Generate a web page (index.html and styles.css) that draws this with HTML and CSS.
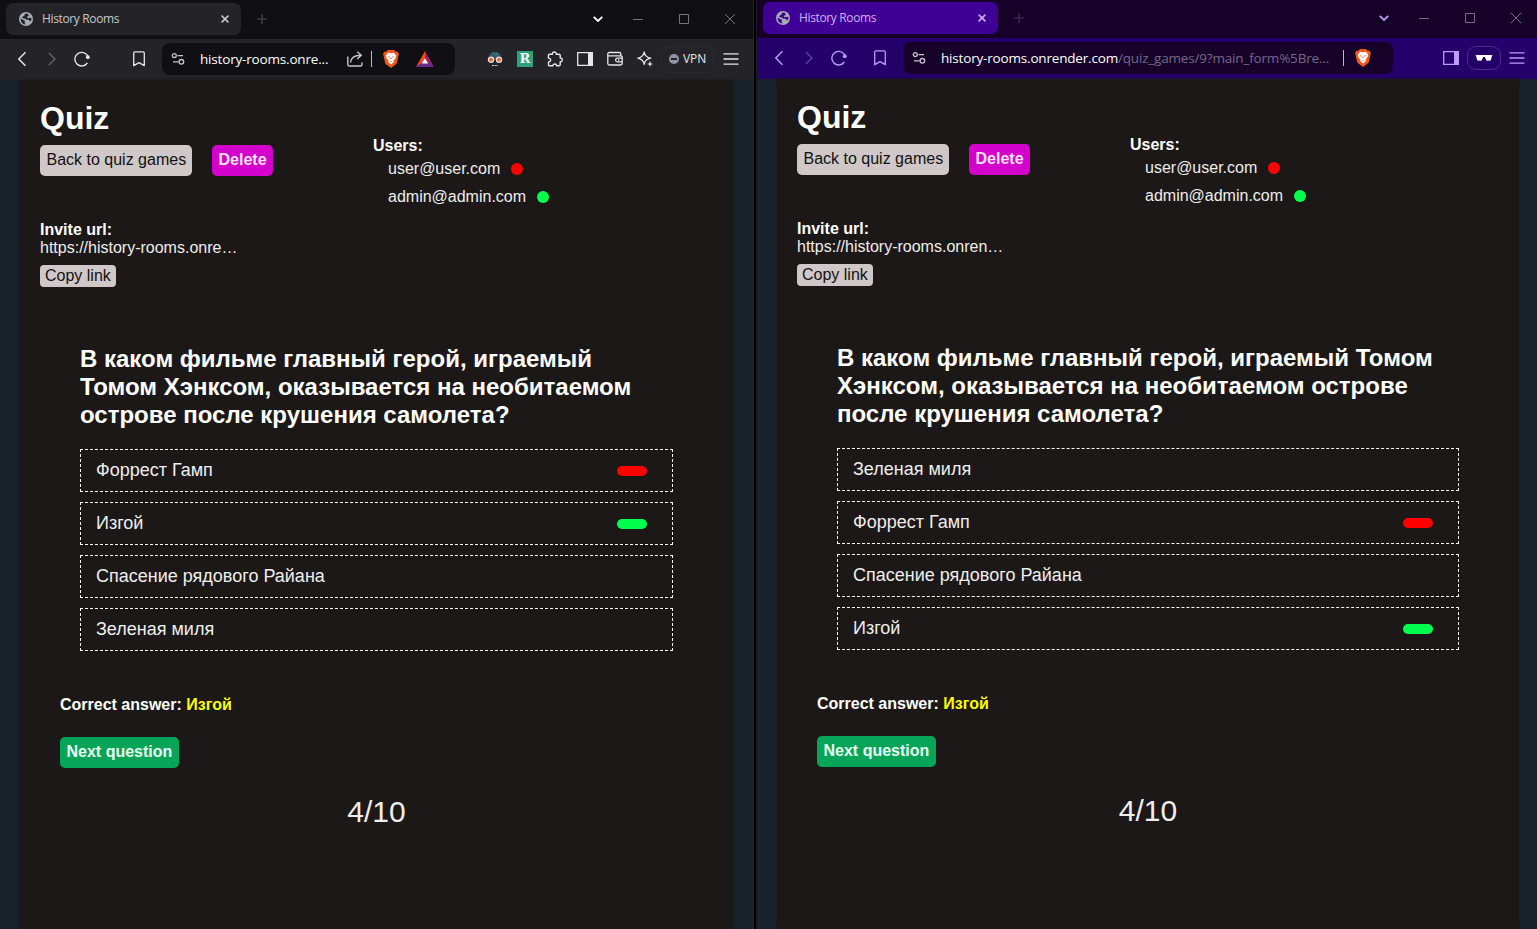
FILE: index.html
```html
<!DOCTYPE html>
<html lang="ru">
<head>
<meta charset="utf-8">
<title>History Rooms</title>
<link rel="stylesheet" href="styles.css">
</head>
<body>
<svg class="defs" width="0" height="0">
  <symbol id="globe" viewBox="0 0 14 14"><circle cx="7" cy="7" r="7" fill="#a9adb3"/><path class="land" d="M6.2 1.6 5.4 3.6 3.2 5 3.6 6.2 6 6.4 7 7.8 9.2 7.6 11 9.2 12.3 8.5 12.4 6 10.4 5.8 8.8 6.2 7.6 5.2 9.8 3.8 9 1.8zM1.5 6.6 4.2 7.9 6 9.1 5.6 10.9 7 12.6 4.2 12 2.2 9.9z"/></symbol>
  <symbol id="x" viewBox="0 0 8 8"><path d="M.6.6 7.4 7.4M7.4.6.6 7.4" stroke="currentColor" stroke-width="1.5"/></symbol>
  <symbol id="plus" viewBox="0 0 10 10"><path d="M5 0V10M0 5H10" stroke="currentColor" stroke-width="1.2"/></symbol>
  <symbol id="chev" viewBox="0 0 10 6"><path d="M.7.8 5 5 9.3.8" fill="none" stroke="currentColor" stroke-width="1.8"/></symbol>
  <symbol id="min" viewBox="0 0 10 10"><path d="M0 5.5H10" stroke="currentColor"/></symbol>
  <symbol id="max" viewBox="0 0 10 10"><path d="M.5.5H9.5V9.5H.5z" fill="none" stroke="currentColor"/></symbol>
  <symbol id="close" viewBox="0 0 10 10"><path d="M0 0 10 10M10 0 0 10" stroke="currentColor" stroke-width="1"/></symbol>
  <symbol id="back" viewBox="0 0 16 16"><path d="M11.5 1.3 4.8 8l6.7 6.7" fill="none" stroke="currentColor" stroke-width="1.5"/></symbol>
  <symbol id="fwd" viewBox="0 0 16 16"><path d="M4.9 2 11 8l-6.1 6" fill="none" stroke="currentColor" stroke-width="1.3"/></symbol>
  <symbol id="reload" viewBox="0 0 16 16"><path d="M13.4 11.8A6.8 6.8 0 1 1 13.2 4.2L14.2 6" fill="none" stroke="currentColor" stroke-width="1.4"/><circle cx="13.8" cy="6.2" r="1.9" fill="currentColor"/></symbol>
  <symbol id="mark" viewBox="0 0 16 16"><path d="M2.7 14.6V2.2Q2.7.8 4 .8H12Q13.3.8 13.3 2.2V14.6L8 11.6z" fill="none" stroke="currentColor" stroke-width="1.3" stroke-linejoin="round"/></symbol>
  <symbol id="tune" viewBox="0 0 14 14"><g fill="none" stroke="currentColor" stroke-width="1.3"><circle cx="3.3" cy="3.6" r="2"/><path d="M6.5 3.6H12M2 9.8H7.5"/><circle cx="10.4" cy="9.8" r="2.3"/></g></symbol>
  <symbol id="share" viewBox="0 0 16 16"><path d="M.8 5.5V13.4Q.8 15 2.4 15H13.4Q15 15 15 13V11.5M3.5 11.5C4 7 7 4.5 13.5 4.3M10.2.8 14.3 4.3 10.2 8" fill="none" stroke="currentColor" stroke-width="1.4"/></symbol>
  <symbol id="brave" viewBox="0 0 16 18"><path d="M5 0H11L12.5 1.5 14.5 1.7 16 4 15.5 5.5 14 12.5Q13.5 14 12 15L8 18 4 15Q2.5 14 2 12.5L.5 5.5 0 4 1.5 1.7 3.5 1.5z" fill="#f1561d"/><path d="M5.2 2.7 8 3.2 10.8 2.7 13.2 5.5 12.5 8.3 10.6 10.6 10.8 12 8 14.4 5.2 12 5.4 10.6 3.5 8.3 2.8 5.5z" fill="#fff"/><path d="M4.4 6.2 7 6.7 6.3 7.7zM11.6 6.2 9 6.7 9.7 7.7zM6.4 10.6 8 11.3 9.6 10.6 8 12zM7.6 7.4H8.4L8.6 8.8 8 9.5 7.4 8.8z" fill="#f1561d"/></symbol>
  <symbol id="bat" viewBox="0 0 18 16"><path d="M9 0 0 16 9 10z" fill="#ff4724"/><path d="M9 0 18 16 9 10z" fill="#9e1f63"/><path d="M0 16H18L9 9z" fill="#662d91"/><path d="M9 7.3 5.8 12.5H12.2z" fill="#fff"/></symbol>
  <symbol id="mask" viewBox="0 0 16 16"><path d="M2 7Q2 1 8 1T14 7V9H2z" fill="#315b6a"/><path d="M5 2 7 1 6 4zM9 1 11 3 8 5z" fill="#447b87"/><path d="M3 9H13L12 13 8 11 4 13z" fill="#15242c"/><circle cx="4" cy="8.8" r="2.6" fill="#d66b56" stroke="#f2ddd1" stroke-width="1.2"/><circle cx="12" cy="8.8" r="2.6" fill="#d66b56" stroke="#f2ddd1" stroke-width="1.2"/><path d="M5 14.5H11" stroke="#c6d2d3" stroke-dasharray="2 .7"/></symbol>
  <symbol id="puzzle" viewBox="0 0 16 16"><path d="M2.6 3.2H5.4C4.9.2 9.6.2 9.2 3.2H12Q13.2 3.2 13.2 4.4V7C16 6.5 16 11.2 13.2 10.8V13.6Q13.2 14.8 12 14.8H9.7C9.7 12.4 6 12.4 6 14.8H2.7Q1.5 14.8 1.5 13.6V11C4.4 11 4.4 7 1.4 7.1V4.4Q1.4 3.2 2.6 3.2z" fill="none" stroke="currentColor" stroke-width="1.4" stroke-linejoin="round"/></symbol>
  <symbol id="side" viewBox="0 0 16 14"><path d="M.7.7H15.3V13.3H.7z" fill="none" stroke="currentColor" stroke-width="1.3"/><path d="M11 0H16V14H11z" fill="currentColor"/></symbol>
  <symbol id="wallet" viewBox="0 0 16 16"><path d="M13.8 4.8V3Q13.8 1.5 12.2 1.5H2.3Q.8 1.5.8 3V12.5Q.8 14 2.3 14H13.5Q15.2 14 15.2 12.3V6.3Q15.2 4.8 13.7 4.8H1M15 7.2H10.5Q8.6 7.2 8.6 9T10.5 10.9H15M11 9H12.3" fill="none" stroke="currentColor" stroke-width="1.3"/></symbol>
  <symbol id="spark" viewBox="0 0 16 16"><path d="M7.2 1Q8 6.2 13.8 7.2 8 8.2 7.2 13.4 6.2 8.2.8 7.2 6.2 6.2 7.2 1z" fill="none" stroke="currentColor" stroke-width="1.3" stroke-linejoin="round"/><path d="M13 9.8 13.8 12.2 16 13 13.8 13.8 13 16 12.2 13.8 10 13 12.2 12.2z" fill="currentColor"/></symbol>
  <symbol id="menu" viewBox="0 0 16 12"><path d="M.5.9H15.5M.5 6H15.5M.5 11.1H15.5" stroke="currentColor" stroke-width="1.3"/></symbol>
  <symbol id="shades" viewBox="0 0 18 8"><path d="M.5.9H17.5L16.7 2.8 15.8 6.4 11.6 6.8 9.8 3H8.2L6.4 6.8 2.2 6.4 1.3 2.8z" fill="#fff"/></symbol>
</svg>

<div class="desktop">
  <section class="window dark">
    <header class="tabs">
      <div class="tab"><svg class="globe"><use href="#globe"/></svg><span class="tab-title">History Rooms</span><svg class="x"><use href="#x"/></svg></div>
      <svg class="plus"><use href="#plus"/></svg>
      <div class="controls"><svg class="chev"><use href="#chev"/></svg><svg class="ctl"><use href="#min"/></svg><svg class="ctl"><use href="#max"/></svg><svg class="ctl"><use href="#close"/></svg></div>
    </header>
    <nav class="toolbar">
      <span class="slot"><svg class="i16"><use href="#back"/></svg></span>
      <span class="slot dim"><svg class="i16"><use href="#fwd"/></svg></span>
      <span class="slot"><svg class="i16"><use href="#reload"/></svg></span>
      <span class="slot bookmark"><svg class="i16"><use href="#mark"/></svg></span>
      <div class="address">
        <svg class="tune"><use href="#tune"/></svg>
        <span class="url">history-rooms.onre...</span>
        <span class="a-share"><svg class="i16"><use href="#share"/></svg></span>
        <span class="a-sep"></span>
        <span class="a-brave"><svg class="brave"><use href="#brave"/></svg></span>
        <span class="a-bat"><svg class="bat"><use href="#bat"/></svg></span>
      </div>
      <div class="tools">
        <span class="slot"><svg class="i16"><use href="#mask"/></svg></span>
        <span class="slot"><b class="r-icon">R</b></span>
        <span class="slot"><svg class="i16"><use href="#puzzle"/></svg></span>
        <span class="slot"><svg class="side"><use href="#side"/></svg></span>
        <span class="slot"><svg class="i16"><use href="#wallet"/></svg></span>
        <span class="slot"><svg class="i16"><use href="#spark"/></svg></span>
        <span class="vpn"><i class="vpn-dot"></i>VPN</span>
        <span class="slot"><svg class="menu"><use href="#menu"/></svg></span>
      </div>
    </nav>
    <div class="page">
      <main class="panel">
        <div class="top">
          <div class="info">
            <h1>Quiz</h1>
            <div class="actions"><a class="btn gray">Back to quiz games</a><a class="btn pink">Delete</a></div>
            <div class="invite"><b>Invite url:</b><span>https://history-rooms.onre…</span><a class="copy">Copy link</a></div>
          </div>
          <div class="users">
            <b>Users:</b>
            <div class="user">user@user.com<i class="dot red"></i></div>
            <div class="user">admin@admin.com<i class="dot green"></i></div>
          </div>
        </div>
        <h2>В каком фильме главный герой, играемый<br>Томом Хэнксом, оказывается на необитаемом<br>острове после крушения самолета?</h2>
        <div class="options">
          <div class="option">Форрест Гамп<i class="bar red"></i></div>
          <div class="option">Изгой<i class="bar green"></i></div>
          <div class="option">Спасение рядового Райана</div>
          <div class="option">Зеленая миля</div>
        </div>
        <p class="answer">Correct answer: <span>Изгой</span></p>
        <a class="btn next">Next question</a>
        <div class="count">4/10</div>
      </main>
    </div>
  </section>

  <section class="window violet">
    <header class="tabs">
      <div class="tab"><svg class="globe"><use href="#globe"/></svg><span class="tab-title">History Rooms</span><svg class="x"><use href="#x"/></svg></div>
      <svg class="plus"><use href="#plus"/></svg>
      <div class="controls"><svg class="chev"><use href="#chev"/></svg><svg class="ctl"><use href="#min"/></svg><svg class="ctl"><use href="#max"/></svg><svg class="ctl"><use href="#close"/></svg></div>
    </header>
    <nav class="toolbar">
      <span class="slot"><svg class="i16"><use href="#back"/></svg></span>
      <span class="slot dim"><svg class="i16"><use href="#fwd"/></svg></span>
      <span class="slot"><svg class="i16"><use href="#reload"/></svg></span>
      <span class="slot bookmark"><svg class="i16"><use href="#mark"/></svg></span>
      <div class="address">
        <svg class="tune"><use href="#tune"/></svg>
        <span class="url">history-rooms.onrender.com<span class="path">/quiz_games/9?main_form%5Bre...</span></span>
        <span class="a-sep"></span>
        <span class="a-brave"><svg class="brave"><use href="#brave"/></svg></span>
      </div>
      <div class="tools">
        <span class="slot"><svg class="side"><use href="#side"/></svg></span>
        <span class="private"><svg class="shades"><use href="#shades"/></svg></span>
        <span class="slot"><svg class="menu"><use href="#menu"/></svg></span>
      </div>
    </nav>
    <div class="page">
      <main class="panel">
        <div class="top">
          <div class="info">
            <h1>Quiz</h1>
            <div class="actions"><a class="btn gray">Back to quiz games</a><a class="btn pink">Delete</a></div>
            <div class="invite"><b>Invite url:</b><span>https://history-rooms.onren…</span><a class="copy">Copy link</a></div>
          </div>
          <div class="users">
            <b>Users:</b>
            <div class="user">user@user.com<i class="dot red"></i></div>
            <div class="user">admin@admin.com<i class="dot green"></i></div>
          </div>
        </div>
        <h2>В каком фильме главный герой, играемый Томом<br>Хэнксом, оказывается на необитаемом острове<br>после крушения самолета?</h2>
        <div class="options">
          <div class="option">Зеленая миля</div>
          <div class="option">Форрест Гамп<i class="bar red"></i></div>
          <div class="option">Спасение рядового Райана</div>
          <div class="option">Изгой<i class="bar green"></i></div>
        </div>
        <p class="answer">Correct answer: <span>Изгой</span></p>
        <a class="btn next">Next question</a>
        <div class="count">4/10</div>
      </main>
    </div>
  </section>
</div>
</body>
</html>
```

FILE: styles.css
```css
* { box-sizing: border-box; }
body { margin: 0; background: #000; font: 16px/18px "Liberation Sans", Arial, sans-serif; color: #fff; overflow: hidden; }
svg { display: block; flex: none; }
.defs { position: absolute; }
.desktop { display: flex; height: 929px; gap: 2px; }
.window { display: flex; flex-direction: column; height: 929px; }

.dark { width: 754px; border-right: 1px solid #242629; --bar: #101014; --tool: #242428; --tab: #242428; --addr: #101014; --ink: #e6e6ea; --dim: #66666b; --title: #c7c7cb; --ctl: #77777b; --chev: #fff; }
.violet { width: 781px; border-left: 1px solid #1b1e24; --bar: #160229; --tool: #24006b; --tab: #3f0095; --addr: #160229; --ink: #c09af5; --dim: #60409f; --title: #cfb0f5; --ctl: #7b6b8b; --chev: #c09af5; }

.tabs { display: flex; align-items: center; height: 39px; padding: 0 18px 1px 6px; background: var(--bar); flex: none; }
.violet .tabs { height: 38px; padding-right: 16px; padding-bottom: 2px; }
.tab { display: flex; align-items: center; width: 235px; height: 32px; padding: 0 12px 0 13px; border-radius: 7px; background: var(--tab); color: var(--title); font: 12px/16px "Open Sans", "Noto Sans", sans-serif; }
.globe { width: 14px; height: 14px; margin-right: 9px; }
.land { fill: var(--tab); }
.tab-title { flex: 1; letter-spacing: -.36px; }
.x { width: 8px; height: 8px; }
.plus { width: 10px; height: 10px; margin-left: 16px; color: #4d4d52; }
.violet .plus { color: #49305f; }
.controls { display: flex; align-items: center; margin-left: auto; color: var(--ctl); gap: 36px; }
.chev { width: 10px; height: 6px; margin-right: -6px; color: var(--chev); }
.ctl { width: 10px; height: 10px; }

.toolbar { display: flex; align-items: center; height: 41px; padding: 0 7px; background: var(--tool); color: var(--ink); flex: none; }
.dark .toolbar { padding-bottom: 1px; }
.violet .toolbar { padding-right: 5px; padding-bottom: 1px; }
.slot { display: flex; justify-content: center; align-items: center; width: 30px; height: 30px; flex: none; }
.dim { color: var(--dim); }
.i16 { width: 16px; height: 16px; }
.bookmark { margin-left: 27px; }
.violet .bookmark { margin-left: 11px; }
.address { display: flex; align-items: center; width: 293px; height: 32px; margin-left: 8px; padding-left: 9px; border-radius: 8px; background: var(--addr); color: #c5c5ca; font: 13.5px/20px "Open Sans", "Noto Sans", sans-serif; }
.violet .address { width: 490px; }
.tune { width: 14px; height: 14px; }
.url { width: 145px; margin-left: 15px; color: #fff; white-space: nowrap; letter-spacing: -.18px; }
.violet .url { width: 396px; }
.path { color: #77678b; }
.a-share { width: 20px; display: flex; justify-content: center; }
.a-sep { width: 1px; height: 16px; margin: 0 5px 0 6px; background: #b9b9c4; }
.a-brave { width: 28px; display: flex; justify-content: center; }
.a-bat { width: 40px; display: flex; justify-content: center; }
.brave { width: 16px; height: 18px; }
.bat { width: 18px; height: 16px; }
.tools { display: flex; align-items: center; margin-left: auto; }
.r-icon { width: 16px; height: 16px; background: #2da37c; font: bold 13px/16px "DejaVu Serif", serif; text-align: center; color: #fff; }
.side { width: 16px; height: 14px; }
.menu { width: 16px; height: 12px; }
.vpn { display: flex; align-items: center; gap: 4px; width: 53px; height: 27px; margin: 0 2px 0 1px; padding-left: 7px; border: 1px solid #2b2b2f; border-radius: 8px; font: 12px/16px "Open Sans", "Noto Sans", sans-serif; letter-spacing: -.1px; }
.vpn-dot { display: flex; align-items: center; justify-content: center; width: 10px; height: 10px; border-radius: 50%; background: #9292a0; }
.vpn-dot::after { content: ""; width: 6px; height: 1.5px; background: #242428; }
.private { display: flex; justify-content: center; align-items: center; width: 34px; height: 24px; margin: 0 1px; border: 1px solid #4c2d8c; border-radius: 9px; }
.shades { width: 18px; height: 8px; }

.page { flex: 1; padding: 0 20px; background: #17222a; }
.violet .page { padding-right: 18px; }
.panel { height: 100%; padding-top: 20px; background: #1c1817; box-shadow: 0 0 3px #1c1817; }
.top { display: grid; grid-template-columns: 333px 1fr; height: 245px; padding-left: 20px; }
h1 { margin: 0 0 8px; font-size: 32px; line-height: 37px; }
.actions { display: flex; gap: 20px; }
.btn { display: inline-block; height: 31px; padding: 6px 6.5px 7px; border-radius: 5px; white-space: nowrap; }
.gray, .copy { background: #d0c8c8; color: #111; }
.gray { width: 152px; }
.pink { width: 61px; background: #d400cb; color: #fbe4fa; font-weight: bold; }
.invite { display: flex; flex-direction: column; align-items: flex-start; margin-top: 45px; }
.invite span { color: #eee; }
.copy { height: 22px; margin-top: 8px; padding: 2px 5px; border-radius: 4px; }
.users { padding-top: 37px; }
.users b { display: block; }
.user { display: flex; align-items: center; gap: 10.5px; height: 28px; padding-left: 15px; color: #eee; }
.dot { width: 12px; height: 12px; border-radius: 50%; }
.red { background: #f00; }
.green { background: #00ff4c; }
h2 { margin: 0 0 20px 60px; font-size: 24px; line-height: 28px; white-space: nowrap; }
.options { display: grid; gap: 10px; margin: 0 60px; }
.option { display: flex; align-items: center; justify-content: space-between; height: 43px; padding: 0 25px 2px 15px; border: 1px dashed #fff; font-size: 18px; color: #eee; }
.bar { width: 30px; height: 10px; border-radius: 5px; margin-top: 3px; }
.answer { margin: 45px 0 23px 40px; font-weight: bold; }
.answer span { color: #ff0; }
.next { margin-left: 40px; background: #06a457; color: #e9fff3; font-weight: bold; }
.count { margin-top: 27px; text-align: center; font-size: 30px; line-height: 34px; color: #eee; }
```
